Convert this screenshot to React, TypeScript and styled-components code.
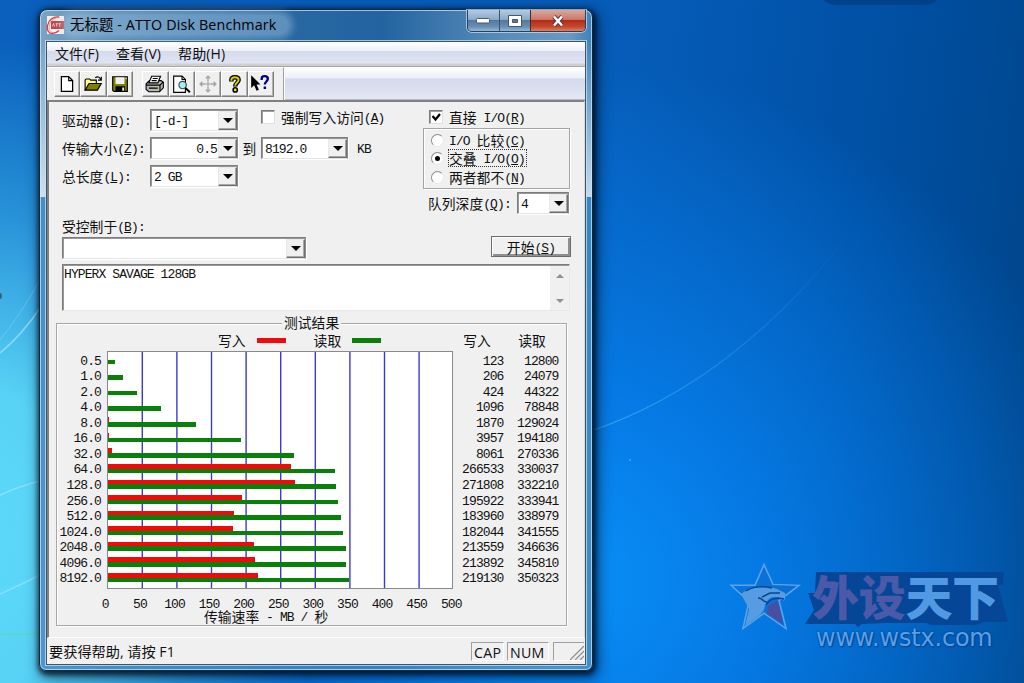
import React from 'react';
import styled, { createGlobalStyle, css } from 'styled-components';

const GlobalStyle = createGlobalStyle`
    * {
        box-sizing: border-box;
    }
    body {
        margin: 0;
        overflow: hidden;
    }
`;

const Desktop = styled.div`
    position: relative;
    width: 1024px;
    height: 683px;
    padding: 9px 0 0 39px;
    overflow: hidden;
    font-family: "Noto Sans CJK SC", sans-serif;
    color: #111;
    background:
        radial-gradient(ellipse 340px 500px at -20px 540px, #5cdafa 0%, rgba(92, 216, 248, 0.95) 30%, rgba(60, 180, 236, 0.6) 65%, rgba(30, 140, 220, 0) 100%),
        radial-gradient(ellipse 560px 520px at 560px 580px, #0a90f8 0%, rgba(6, 128, 238, 0.85) 35%, rgba(0, 96, 208, 0) 100%),
        linear-gradient(97deg, #0a60bc 0%, #065cb8 58%, #0050a4 80%, #004488 100%);
`;

const Wallpaper = styled.svg`
    position: absolute;
    left: 0;
    top: 0;
`;

const Window = styled.div`
    position: relative;
    width: 554px;
    height: 662px;
    padding: 0 5px;
    border: 1px solid #14283c;
    border-radius: 8px 8px 7px 7px;
    box-shadow: inset 0 0 0 1px rgba(210, 232, 248, 0.7), 1px 2px 5px 2px rgba(0, 12, 30, 0.75), 3px 5px 14px 3px rgba(0, 16, 40, 0.5);
    background:
        linear-gradient(to bottom, rgba(220, 232, 244, 0) 30px, rgba(220, 234, 246, 0.85) 187px, rgba(255, 255, 255, 0) 187px),
        linear-gradient(to bottom, rgba(52, 136, 196, 0) 187px, rgba(44, 136, 200, 0.7) 187px, rgba(62, 146, 204, 0.7) 100%),
        linear-gradient(to right, #7ba5c6 0%, #4f86b4 12%, #2968a2 44%, #2263a0 62%, #5a8cba 84%, #6a98c2 96%, #3c82ba 100%);
`;

const TitleBar = styled.div`
    display: flex;
    height: 31px;
    padding-left: 1px;
`;

const Title = styled.div`
    display: flex;
    align-items: center;
    height: 20px;
    margin-top: 5px;
    padding: 0 12px 0 5px;
    font: 14.3px/20px "Open Sans", "Noto Sans CJK SC", sans-serif;
    letter-spacing: 0.15px;
    white-space: nowrap;
    border-radius: 10px;
    color: #000;
    background: rgba(190, 216, 236, 0.36);
    box-shadow: 0 0 7px 4px rgba(190, 216, 236, 0.36);
`;

const TitleIcon = styled.svg`
    flex: none;
    margin-top: 6px;
`;

const CaptionButtons = styled.div`
    display: flex;
    width: 119px;
    height: 22px;
    margin-left: auto;
    margin-right: 1px;
    border: 1px solid #2a4058;
    border-top: 0;
    border-radius: 0 0 5px 5px;
    overflow: hidden;
    box-shadow: 0 0 0 1px rgba(215, 232, 246, 0.65);
`;

const CaptionButton = styled.div<{ $close?: boolean }>`
    display: flex;
    align-items: center;
    justify-content: center;
    flex: ${p => (p.$close ? '0 0 55px' : '1')};
    border-left: 1px solid ${p => (p.$close ? '#4a2630' : '#3a5470')};
    background: ${p =>
        p.$close
            ? 'linear-gradient(#d9a9a0 0%, #cc7868 45%, #b02c18 50%, #c8482c 80%, #dc8060 100%)'
            : 'linear-gradient(#b4cbe0 0%, #8aabc8 45%, #54799c 50%, #6890b4 80%, #90b8d8 100%)'};
    &:first-child {
        border-left: 0;
    }
`;

const Client = styled.div`
    display: flex;
    flex-direction: column;
    width: 540px;
    height: 624px;
    margin-left: 1px;
    border: 1px solid #3d566e;
    box-shadow: 0 0 0 1px rgba(200, 224, 242, 0.75);
    background: #f0f0f0;
`;

const MenuBar = styled.div`
    display: flex;
    flex: none;
    height: 25px;
    padding: 0 8px;
    gap: 17px;
    font: 14px/23px "Open Sans", "Noto Sans CJK SC", sans-serif;
    letter-spacing: 0.1px;
    border-bottom: 1px solid #a8a8a8;
    background: linear-gradient(#fff 0, #eceff8 9px, #d5dbec 9px, #dfe4f4 21px, #cfcfcf 22px);
`;

const ToolBar = styled.div`
    display: flex;
    flex: none;
    height: 33px;
    background: linear-gradient(#fff 0, #eceff8 11px, #d4daec 12px, #e3e7f5 32px, #bbb 32px);
`;

const ToolBand = styled.div`
    display: flex;
    width: 237px;
    padding: 3px 0 0 7px;
    background: #f0f0f0;
    border-top: 1px solid #fff;
    border-right: 1px solid #a0a0a0;
    box-shadow: 1px 0 #fff;
`;

const ToolButton = styled.div<{ $gap?: boolean }>`
    display: flex;
    align-items: center;
    justify-content: center;
    width: 26.4px;
    height: 26px;
    margin-left: ${p => (p.$gap ? '9px' : '0')};
    border: 1px solid;
    border-color: #fff #808080 #808080 #fff;
    box-shadow: inset -1px -1px #b0b0b0;
`;

const View = styled.div`
    display: flex;
    flex-direction: column;
    flex: none;
    height: 538px;
    padding-left: 1px;
    border-top: 2px solid #808080;
    border-left: 2px solid #808080;
    border-right: 1px solid #d8d8d8;
    border-bottom: 1px solid #fff;
`;

const Upper = styled.div`
    display: flex;
    height: 114px;
`;

const LeftPane = styled.div`
    display: flex;
    flex-direction: column;
    gap: 6px;
    width: 373px;
    padding: 7px 0 0 12px;
`;

const Row = styled.div`
    display: flex;
    align-items: center;
    height: 22px;
`;

const RightPane = styled.div`
    display: flex;
    flex-direction: column;
    width: 147px;
    padding-top: 8px;
`;

const songti = css`
    font: 13.8px/18px "Noto Sans CJK SC", sans-serif;
    white-space: pre;
`;

const Song = styled.span<{ $width?: number; $align?: string }>`
    ${songti}
    display: block;
    flex: none;
    width: ${p => (p.$width ? `${p.$width}px` : 'auto')};
    text-align: ${p => p.$align || 'left'};
`;

const HalfWidth = styled.span`
    font-family: "Liberation Mono", monospace;
    font-size: 13px;
    line-height: 1;
    letter-spacing: -0.9px;
    vertical-align: 1px;
`;

const Mnemonic = styled.u`
    text-underline-offset: 1px;
`;

const Unit = styled.div`
    padding-left: 9px;
`;

const ComboFrame = styled.div<{ $width: number }>`
    display: flex;
    align-items: center;
    flex: none;
    width: ${p => p.$width}px;
    height: 22px;
    border: 1px solid;
    border-color: #7c7c7c #8c8c8c #8c8c8c #7c7c7c;
    border-bottom-color: #e4e4e4;
    box-shadow: inset 1px 1px #989898, 1px 1px #fff;
    background: #fff;
`;

const ComboValue = styled.div`
    flex: 1;
    padding: 0 1px 0 3px;
`;

const ComboArrow = styled.div`
    display: flex;
    align-items: center;
    justify-content: center;
    width: 19px;
    height: 19px;
    margin-top: 1px;
    background: #f0f0f0;
    border: 1px solid;
    border-color: #e8e8e8 #707070 #707070 #e8e8e8;
    box-shadow: inset -1px -1px #a8a8a8;
    &::after {
        content: "";
        border: 5px solid transparent;
        border-top-color: #000;
        border-bottom: 0;
    }
`;

const CheckRow = styled.div<{ $lift?: number; $indent?: number }>`
    display: flex;
    align-items: center;
    gap: 6px;
    height: 14px;
    margin-top: -${p => p.$lift || 0}px;
    margin-left: ${p => p.$indent || 0}px;
`;

const CheckBox = styled.div`
    display: flex;
    flex: none;
    width: 14px;
    height: 14px;
    background: #fff;
    border: 1px solid;
    border-color: #7a7a7a #e0e0e0 #e0e0e0 #7a7a7a;
    box-shadow: inset 1px 1px #a0a0a0;
`;

const RadioBox = styled.div`
    height: 61px;
    padding: 2px 0 0 7px;
    margin-top: 4px;
    border: 1px solid #a4a4a4;
    box-shadow: 1px 1px #fff, inset 1px 1px #fff;
`;

const RadioRow = styled.div<{ $height: number }>`
    display: flex;
    align-items: center;
    gap: 5px;
    height: ${p => p.$height}px;
`;

const Radio = styled.div<{ $on?: boolean }>`
    display: flex;
    align-items: center;
    justify-content: center;
    width: 13px;
    height: 13px;
    border-radius: 50%;
    background: #fff;
    border: 1.5px solid;
    border-color: #8a8a8a #e8e8e8 #e8e8e8 #8a8a8a;
    &::after {
        content: "";
        width: 5px;
        height: 5px;
        border-radius: 50%;
        background: ${p => (p.$on ? '#000' : 'transparent')};
    }
`;

const FocusRing = styled.div<{ $on?: boolean }>`
    outline: ${p => (p.$on ? '1px dotted #333' : 'none')};
    height: 16px;
    line-height: 16px;
    padding-right: 1px;
    ${Song} {
        line-height: 16px;
    }
`;

const QueueRow = styled(Row)`
    margin-top: 3px;
    padding-left: 5px;
`;

const ControlLabel = styled.div`
    height: 19px;
    padding-left: 12px;
    margin-top: 2px;
    ${Song} {
        line-height: 17px;
    }
`;

const ControlRow = styled.div`
    display: flex;
    justify-content: space-between;
    width: 521px;
    padding-left: 12px;
    height: 22px;
`;

const StartButton = styled.div`
    display: flex;
    align-items: center;
    justify-content: center;
    width: 80px;
    height: 21px;
    margin-top: -1px;
    border: 1px solid #6c6c6c;
    box-shadow: inset 1px 1px #fff, inset -2px -2px #909090;
    ${Song} {
        line-height: 16px;
    }
`;

const Memo = styled.div`
    display: flex;
    flex: none;
    justify-content: space-between;
    width: 508px;
    height: 47px;
    margin: 5px 0 0 12px;
    padding-left: 1px;
    background: #fff;
    border: 1px solid;
    border-color: #7c7c7c #e8e8e8 #e8e8e8 #7c7c7c;
    box-shadow: inset 1px 1px #989898;
    ${Song} {
        line-height: 17px;
    }
`;

const ScrollBar = styled.div`
    display: flex;
    flex-direction: column;
    align-items: center;
    justify-content: space-between;
    width: 19px;
    margin-top: 1px;
    padding: 8px 0 7px;
    background: #f0f0f0;
`;

const ScrollArrow = styled.div<{ $down?: boolean }>`
    border: 4.5px solid transparent;
    ${p => (p.$down ? 'border-top-color: #909090; border-bottom: 0;' : 'border-bottom-color: #909090; border-top: 0;')}
`;

const Results = styled.div`
    position: relative;
    width: 511px;
    height: 303px;
    flex: none;
    margin: 12px 0 0 6px;
    border: 1px solid #a6a6a6;
    box-shadow: 1px 1px #fff, inset 1px 1px #fff;
`;

const ResultsTitle = styled.div`
    position: absolute;
    left: 225px;
    top: -10px;
    padding: 0 2px;
    background: #f0f0f0;
    ${Song} {
        line-height: 17px;
    }
`;

const LegendRow = styled.div`
    display: flex;
    align-items: center;
    height: 27px;
    padding: 5px 0 0 161px;
`;

const Swatch = styled.div<{ $color: string; $after: number }>`
    width: 29px;
    height: 5px;
    margin: 0 ${p => p.$after}px 0 11px;
    background: ${p => p.$color};
`;

const ChartBody = styled.div`
    display: flex;
    height: 238px;
`;

const Column = styled.div<{ $width: number }>`
    width: ${p => p.$width}px;
    padding-top: 1.5px;
`;

const Cell = styled.div`
    height: 15.57px;
    ${Song} {
        line-height: 15.5px;
        text-align: right;
    }
`;

const Plot = styled.div`
    position: relative;
    width: 346px;
    margin-left: 5.5px;
    border: 1px solid #8a8a8a;
    background: #fff;
`;

const GridLines = styled.svg`
    position: absolute;
    left: 0;
    top: 0;
`;

const BarPair = styled.div`
    position: relative;
    height: 15.57px;
    padding-top: 3.1px;
`;

const Bar = styled.div<{ $color: string }>`
    height: 4.6px;
    background: ${p => p.$color};
`;

const Axis = styled.div`
    display: flex;
    height: 14px;
    margin: 7px 0 0 31px;
    ${Song} {
        line-height: 14px;
    }
`;

const AxisCaption = styled.div`
    margin: -1px 0 0 147px;
    ${Song} {
        line-height: 14px;
    }
`;

const StatusBar = styled.div`
    display: flex;
    flex: 1;
    padding: 4px 1px 0 2px;
    gap: 3px;
    font: 14.2px/20px "Open Sans", "Noto Sans CJK SC", sans-serif;
`;

const StatusText = styled.div`
    flex: 1;
`;

const StatusPane = styled.div<{ $width: number }>`
    width: ${p => p.$width}px;
    height: 19px;
    padding-left: 2px;
    line-height: 19px;
    letter-spacing: 0.3px;
    border: 1px solid;
    border-color: #a0a0a0 #fff #fff #a0a0a0;
`;

const Grip = styled(StatusPane)`
    display: flex;
    justify-content: flex-end;
    align-items: flex-end;
    border-right: 0;
    margin-left: 1px;
`;

const Watermark = styled.div`
    position: absolute;
    left: 728px;
    top: 560px;
    display: flex;
`;

const WatermarkStar = styled.svg`
    flex: none;
    margin-top: 1px;
`;

const WatermarkWords = styled.div`
    position: relative;
    width: 205px;
    height: 94px;
`;

const WatermarkPlate = styled.svg`
    position: absolute;
    left: 0;
    top: 0;
`;

const WatermarkName = styled.div`
    position: relative;
    padding: 14px 0 0 8px;
    font: 900 47px/42px "Noto Sans CJK SC", sans-serif;
    letter-spacing: -0.3px;
    white-space: nowrap;
    color: #5299e4;
`;

const WatermarkAccent = styled.span`
    color: #4a5aa8;
`;

const WatermarkUrl = styled.div`
    position: relative;
    padding-left: 12px;
    margin-top: 8px;
    font: 24px/28px "DejaVu Sans", sans-serif;
    letter-spacing: -0.2px;
    color: #58a0e8;
    text-shadow: 0 0 2px #003c84, 1px 1px 1px #004898;
`;

interface ResultRow {
    size: string;
    write: number;
    read: number;
}

const results: ResultRow[] = [
    { size: '0.5', write: 123, read: 12800 },
    { size: '1.0', write: 206, read: 24079 },
    { size: '2.0', write: 424, read: 44322 },
    { size: '4.0', write: 1096, read: 78848 },
    { size: '8.0', write: 1870, read: 129024 },
    { size: '16.0', write: 3957, read: 194180 },
    { size: '32.0', write: 8061, read: 270336 },
    { size: '64.0', write: 266533, read: 330037 },
    { size: '128.0', write: 271808, read: 332210 },
    { size: '256.0', write: 195922, read: 333941 },
    { size: '512.0', write: 183960, read: 338979 },
    { size: '1024.0', write: 182044, read: 341555 },
    { size: '2048.0', write: 213559, read: 346636 },
    { size: '4096.0', write: 213892, read: 345810 },
    { size: '8192.0', write: 219130, read: 350323 },
];

const ticks = [0, 50, 100, 150, 200, 250, 300, 350, 400, 450, 500];

const RED = '#f00a0a';
const GREEN = '#0a800a';

// kB/s to pixels, the full scale is 500 MB/s
const barWidth = (value: number) => Math.max(0, (value / 500000) * 346 - 0.9);

// Latin runs take half the width of a Chinese character, "&" marks the mnemonic
const Label: React.FC<{ text: string; width?: number; align?: string }> = ({ text, width, align }) => (
    <Song $width={width} $align={align}>
        {text.split(/([\x20-\x7e]+)/).map((run, i) => {
            if (i % 2 === 0) return run;
            const [before, after] = run.split('&');
            return (
                <HalfWidth key={i}>
                    {before}
                    {after && <Mnemonic>{after[0]}</Mnemonic>}
                    {after && after.slice(1)}
                </HalfWidth>
            );
        })}
    </Song>
);

const Combo: React.FC<{ value: string; width: number; align?: string }> = ({ value, width, align }) => (
    <ComboFrame $width={width}>
        <ComboValue>
            <Label text={value} align={align} />
        </ComboValue>
        <ComboArrow />
    </ComboFrame>
);

const NewIcon = () => (
    <svg width="18" height="18" viewBox="0 0 16 16">
        <path d="M3 1.5h6.5L13 5v9.5H3z" fill="#fff" stroke="#000" strokeWidth="1.1" />
        <path d="M9.5 1.5V5H13" fill="none" stroke="#000" />
    </svg>
);

const OpenIcon = () => (
    <svg width="19" height="18" viewBox="0 0 17 16">
        <path d="M1 13.5V4.5l1-1h3l1 1h5v3" fill="#ffff80" stroke="#000" />
        <path d="M1 13.5l3.5-6h11l-3.5 6z" fill="#808000" stroke="#000" />
        <path d="M10 2.5c2-1.5 4-1 5 1.5M15.5 1.5V4.5h-3" fill="none" stroke="#000" />
    </svg>
);

const SaveIcon = () => (
    <svg width="18" height="18" viewBox="0 0 16 16">
        <path d="M1.5 1.5h13v13h-12l-1-1z" fill="#808000" stroke="#000" />
        <path d="M4 2h8v6H4z" fill="#f0f0f0" />
        <path d="M4 10h8.5v4.5H4z" fill="#000" />
        <path d="M10 11h1.7v3H10zM13 2.5h1v1.3h-1z" fill="#f0f0f0" />
    </svg>
);

const PrintIcon = () => (
    <svg width="20" height="18" viewBox="0 0 18 16">
        <path d="M1 8l3-3h10.5l2 1.5v5L13 15H3.5L1 13z" fill="#b8b8b8" stroke="#000" />
        <path d="M6 1h8l-2.5 6H3.5z" fill="#fff" stroke="#000" />
        <path d="M7 3h4.5M6 5h4.5M1 9h12.5l3-3M13.5 9v5.5M3.5 11.7h8" fill="none" stroke="#000" />
        <path d="M9 10.3h2.5" stroke="#e0d000" />
    </svg>
);

const PreviewIcon = () => (
    <svg width="19" height="19" viewBox="0 0 17 17">
        <path d="M1.5 1h7.5l3 3v11.5H1.5z" fill="#fff" stroke="#000" />
        <path d="M9 1v3h3" fill="none" stroke="#000" />
        <circle cx="9.5" cy="9" r="3.3" fill="#a0f0f8" stroke="#404040" />
        <path d="M12 11.5l4 4" stroke="#000" strokeWidth="1.8" />
    </svg>
);

const MoveIcon = () => (
    <svg width="18" height="18" viewBox="0 0 16 16" fill="none" stroke="#a4a4a4">
        <path d="M8 1v5M8 10v5M1 8h5M10 8h5M6 3l2-2 2 2M6 13l2 2 2-2M3 6L1 8l2 2M13 6l2 2-2 2" strokeWidth="1.2" />
        <circle cx="8" cy="8" r="1" />
    </svg>
);

const HelpIcon = () => (
    <svg width="18" height="18" viewBox="0 0 16 16" fill="none">
        <path d="M4.8 5.8V4.3C4.8 2.8 6 2 8 2s3.2.9 3.2 2.5C11.2 6.5 8.2 7 8.2 10.3" stroke="#000" strokeWidth="4" />
        <circle cx="8.2" cy="13.3" r="1.9" fill="#e8e000" stroke="#000" strokeWidth="1.3" />
        <path d="M4.8 5V4.3C4.8 2.8 6 2 8 2s3.2.9 3.2 2.5C11.2 6.5 8.2 7 8.2 9.5" stroke="#d8d000" strokeWidth="1.7" />
    </svg>
);

const ContextHelpIcon = () => (
    <svg width="21" height="20" viewBox="0 0 18 17">
        <path d="M1 1v11l2.6-2.5 2 4.8 2-.9-2-4.500H9z" fill="#000" />
        <path d="M10 5V4c0-1.5 1-2.2 2.5-2.2S15.3 2.6 15.3 4c0 2.2-2.6 2.5-2.6 5" fill="none" stroke="#000090" strokeWidth="2" />
        <path d="M11.7 10.7h2.1v2h-2.1z" fill="#000090" />
    </svg>
);

const AttoIcon = () => (
    <TitleIcon width="19" height="19" viewBox="0 0 19 19">
        <path d="M1 0h17v18H1z" fill="#f4eeee" />
        <rect x="5" y="5" width="13" height="8" fill="#b84a4c" />
        <path d="M6.5 10.5L7.5 7.5l1 3M9.5 7.7h2.5M10.7 7.7v3M12.5 7.7H15M13.7 7.7v3" stroke="#f0cccc" fill="none" strokeWidth=".9" />
        <path d="M13 1C7 .5 2.500 4 1.500 9.500.8 14 2.500 17.500 6 17.500c2.500 0 5-1 7-3" fill="none" stroke="#e03838" strokeWidth="1.3" />
        <path d="M14 1.5C9 1.5 5 4 3.5 8.5c-1 4 0 7 3 8" fill="none" stroke="#e88080" strokeWidth=".8" />
    </TitleIcon>
);

const Backdrop = () => (
    <Wallpaper width="1024" height="683" viewBox="0 0 1024 683" fill="none">
        <defs>
            <linearGradient id="ray" gradientUnits="userSpaceOnUse" x1="594" y1="0" x2="850" y2="0">
                <stop offset="0" stopColor="#60c0ff" stopOpacity=".5" />
                <stop offset="1" stopColor="#60c0ff" stopOpacity="0" />
            </linearGradient>
        </defs>
        <path d="M594 430C680 400 770 340 860 220" stroke="url(#ray)" strokeWidth="1.3" />
        <path d="M0 353Q22 335 40 308" stroke="#c0f4ff" strokeOpacity=".55" strokeWidth="1.5" />
        <path d="M0 340Q20 315 40 280" stroke="#c0f4ff" strokeOpacity=".25" />
        <path d="M0 495Q20 486 40 481M0 594Q20 585 40 575" stroke="#c0f4ff" strokeOpacity=".4" strokeWidth="1.5" />
        <path d="M0 634h40" stroke="#60d8a0" />
        <ellipse cx="0" cy="296" rx="2" ry="3" fill="#306880" />
        <path d="M824 0h113q-4 5-14 5h-85q-10 0-14-5z" fill="#003878" fillOpacity=".6" />
        <circle cx="630" cy="460" r="1" fill="#40a8f8" />
    </Wallpaper>
);

const App: React.FC = () => (
    <Desktop>
        <GlobalStyle />
        <Backdrop />

        <Window>
            <TitleBar>
                <AttoIcon />
                <Title>无标题 - ATTO Disk Benchmark</Title>
                <CaptionButtons>
                    <CaptionButton>
                        <svg width="14" height="7">
                            <rect x=".5" y="1.5" width="13" height="4.5" rx="1" fill="#fff" stroke="#46586c" />
                        </svg>
                    </CaptionButton>
                    <CaptionButton>
                        <svg width="14" height="12">
                            <path d="M.5.5h13v11H.5zM4.5 4.5v3h5v-3z" fill="#fff" fillRule="evenodd" stroke="#46586c" />
                        </svg>
                    </CaptionButton>
                    <CaptionButton $close>
                        <svg width="14" height="12" viewBox="0 0 14 12">
                            <path d="M3 1.5l8 9M11 1.5l-8 9" stroke="#5c3038" strokeWidth="4.4" />
                            <path d="M3 1.5l8 9M11 1.5l-8 9" stroke="#fff" strokeWidth="2.6" />
                        </svg>
                    </CaptionButton>
                </CaptionButtons>
            </TitleBar>

            <Client>
                <MenuBar>
                    <span>文件(F)</span>
                    <span>查看(V)</span>
                    <span>帮助(H)</span>
                </MenuBar>
                <ToolBar>
                    <ToolBand>
                        <ToolButton><NewIcon /></ToolButton>
                        <ToolButton><OpenIcon /></ToolButton>
                        <ToolButton><SaveIcon /></ToolButton>
                        <ToolButton $gap><PrintIcon /></ToolButton>
                        <ToolButton><PreviewIcon /></ToolButton>
                        <ToolButton><MoveIcon /></ToolButton>
                        <ToolButton><HelpIcon /></ToolButton>
                        <ToolButton><ContextHelpIcon /></ToolButton>
                    </ToolBand>
                </ToolBar>

                <View>
                    <Upper>
                        <LeftPane>
                            <Row>
                                <Label text="驱动器(&D):" width={88} />
                                <Combo value="[-d-]" width={88} />
                                <CheckRow $lift={6} $indent={23}>
                                    <CheckBox />
                                    <Label text="强制写入访问(&A)" />
                                </CheckRow>
                            </Row>
                            <Row>
                                <Label text="传输大小(&Z):" width={88} />
                                <Combo value="0.5" width={88} align="right" />
                                <Label text="到" width={23} align="center" />
                                <Combo value="8192.0" width={87} />
                                <Unit><Label text="KB" /></Unit>
                            </Row>
                            <Row>
                                <Label text="总长度(&L):" width={88} />
                                <Combo value="2 GB" width={88} />
                            </Row>
                        </LeftPane>
                        <RightPane>
                            <CheckRow $indent={6}>
                                <CheckBox>
                                    <svg width="12" height="12" fill="none">
                                        <path d="M2.5 5l3 3.5L10 3" stroke="#000" strokeWidth="2.2" />
                                    </svg>
                                </CheckBox>
                                <Label text="直接 I/O(&R)" />
                            </CheckRow>
                            <RadioBox>
                                <RadioRow $height={18}>
                                    <Radio />
                                    <FocusRing><Label text="I/O 比较(&C)" /></FocusRing>
                                </RadioRow>
                                <RadioRow $height={18}>
                                    <Radio $on />
                                    <FocusRing $on><Label text="交叠 I/O(&O)" /></FocusRing>
                                </RadioRow>
                                <RadioRow $height={20}>
                                    <Radio />
                                    <FocusRing><Label text="两者都不(&N)" /></FocusRing>
                                </RadioRow>
                            </RadioBox>
                            <QueueRow>
                                <Label text="队列深度(&Q):" width={89} />
                                <Combo value="4" width={52} />
                            </QueueRow>
                        </RightPane>
                    </Upper>

                    <ControlLabel>
                        <Label text="受控制于(&B):" />
                    </ControlLabel>
                    <ControlRow>
                        <Combo value="" width={244} />
                        <StartButton>
                            <Label text="开始(&S)" />
                        </StartButton>
                    </ControlRow>
                    <Memo>
                        <Label text="HYPERX SAVAGE 128GB" />
                        <ScrollBar>
                            <ScrollArrow />
                            <ScrollArrow $down />
                        </ScrollBar>
                    </Memo>

                    <Results>
                        <ResultsTitle>
                            <Label text="测试结果" />
                        </ResultsTitle>
                        <LegendRow>
                            <Label text="写入" />
                            <Swatch $color={RED} $after={28} />
                            <Label text="读取" />
                            <Swatch $color={GREEN} $after={82} />
                            <Label text="写入" width={55} />
                            <Label text="读取" />
                        </LegendRow>
                        <ChartBody>
                            <Column $width={44}>
                                {results.map(r => (
                                    <Cell key={r.size}><Label text={r.size} /></Cell>
                                ))}
                            </Column>
                            <Plot>
                                <GridLines width="344" height="236" stroke="#3a3ad0" strokeWidth="1.4">
                                    {ticks.slice(1, -1).map(t => (
                                        <path key={t} d={`M${t * 0.692 - 0.3} 0v236`} />
                                    ))}
                                </GridLines>
                                {results.map(r => (
                                    <BarPair key={r.size}>
                                        <Bar $color={RED} style={{ width: barWidth(r.write) }} />
                                        <Bar $color={GREEN} style={{ width: barWidth(r.read) }} />
                                    </BarPair>
                                ))}
                            </Plot>
                            <Column $width={51}>
                                {results.map(r => (
                                    <Cell key={r.size}><Label text={String(r.write)} /></Cell>
                                ))}
                            </Column>
                            <Column $width={55}>
                                {results.map(r => (
                                    <Cell key={r.size}><Label text={String(r.read)} /></Cell>
                                ))}
                            </Column>
                        </ChartBody>
                        <Axis>
                            {ticks.map(t => (
                                <Label key={t} text={String(t)} width={34.6} align="center" />
                            ))}
                        </Axis>
                        <AxisCaption>
                            <Label text="传输速率 - MB / 秒" />
                        </AxisCaption>
                    </Results>
                </View>

                <StatusBar>
                    <StatusText>要获得帮助, 请按 F1</StatusText>
                    <StatusPane $width={33}>CAP</StatusPane>
                    <StatusPane $width={42}>NUM</StatusPane>
                    <Grip $width={31}>
                        <svg width="14" height="14" stroke="#909090" strokeWidth="1.3">
                            <path d="M0 14L14 0M5 14l9-9M10 14l4-4" />
                        </svg>
                    </Grip>
                </StatusBar>
            </Client>
        </Window>

        <Watermark>
            <WatermarkStar width="76" height="72" viewBox="0 0 76 72">
                <path d="M36 4l9 22 26 1-20 17 7 31-22-17-21 17 6-30L3 27h24z" transform="scale(1 .9)" fill="#1a5cb8" fillOpacity=".25" stroke="#5ca4ea" strokeWidth="1.6" />
                <path d="M13 33c8-7 26-9 36-5l8 4c1 3 0 6-1 8-3-4-8-5-14-3-3 3-5 6-6 12l-4 5-15 11 4-17z" fill="#559ce2" />
                <path d="M40 45l10-5 1 5 4 18-16-10z" fill="#46509e" />
                <path d="M18 30c7-5 18-5 26-3M34 36l8-4h10M30 37c6 0 4 4 9 4M38 44c4-7 10-8 18-6" fill="none" stroke="#06468e" strokeWidth="1.5" />
            </WatermarkStar>
            <WatermarkWords>
                <WatermarkPlate width="205" height="70" viewBox="0 0 205 70">
                    <path d="M12 12h188l-1 13h-5l10 37h-24l-8 3h-45l-5-2h-40l-24 1-4 3-3-3H1l9-14-6-17h7z" fill="#064696" />
                </WatermarkPlate>
                <WatermarkName>
                    <WatermarkAccent>外设</WatermarkAccent>天下
                </WatermarkName>
                <WatermarkUrl>www.wstx.com</WatermarkUrl>
            </WatermarkWords>
        </Watermark>
    </Desktop>
);

export default App;
